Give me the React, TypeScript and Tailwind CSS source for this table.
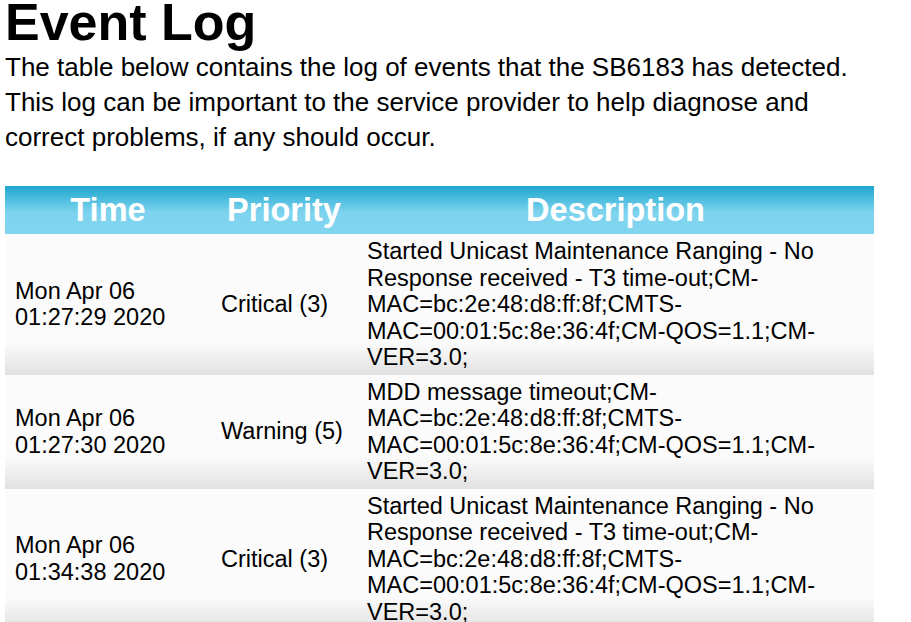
type LogEvent = {
  date: string;
  time: string;
  priority: string;
  description: string;
};

const T3_TIMEOUT =
  "Started Unicast Maintenance Ranging - No Response received - T3 time-out;CM-MAC=bc:2e:48:d8:ff:8f;CMTS-MAC=00:01:5c:8e:36:4f;CM-QOS=1.1;CM-VER=3.0;";

const EVENTS: LogEvent[] = [
  { date: "Mon Apr 06", time: "01:27:29 2020", priority: "Critical (3)", description: T3_TIMEOUT },
  {
    date: "Mon Apr 06",
    time: "01:27:30 2020",
    priority: "Warning (5)",
    description:
      "MDD message timeout;CM-MAC=bc:2e:48:d8:ff:8f;CMTS-MAC=00:01:5c:8e:36:4f;CM-QOS=1.1;CM-VER=3.0;",
  },
  { date: "Mon Apr 06", time: "01:34:38 2020", priority: "Critical (3)", description: T3_TIMEOUT },
];

// gray fade at the bottom of every row, like the modem's stock stylesheet
const rowBg =
  "bg-[linear-gradient(to_bottom,#fbfbfb_0%,#fbfbfb_calc(100%_-_32px),#e1e1e1_100%)]";

export default function App() {
  return (
    <div className="min-h-screen bg-white pl-[5px] font-['Liberation_Sans',Arial,sans-serif] text-black">
      <div className="w-[869px]">
        <h1 className="text-[52px] leading-[44px] font-bold">Event Log</h1>
        <p className="mt-[6px] text-[26px] leading-[35px]">
          The table below contains the log of events that the SB6183 has detected. This log can
          be important to the service provider to help diagnose and correct problems, if any
          should occur.
        </p>

        <table className="mt-[31px] w-[869px] table-fixed border-collapse text-[23.5px] leading-[26.5px]">
          <colgroup>
            <col className="w-[206px]" />
            <col className="w-[146px]" />
            <col className="w-[517px]" />
          </colgroup>
          <thead>
            <tr className="bg-[linear-gradient(to_bottom,#1ea7cf_0%,#7dd3ee_55%,#82d5ef_100%)]">
              <th className="h-[48px] p-0 text-center text-[32.5px] leading-[48px] font-bold text-white">
                Time
              </th>
              <th className="h-[48px] p-0 text-center text-[32.5px] leading-[48px] font-bold text-white">
                Priority
              </th>
              <th className="h-[48px] p-0 text-center text-[32.5px] leading-[48px] font-bold text-white">
                Description
              </th>
            </tr>
          </thead>
          <tbody>
            {EVENTS.map((ev, i) => (
              <tr key={i}>
                <td className={`${rowBg} px-[10px] py-1 align-middle`}>
                  {ev.date} {ev.time}
                </td>
                <td className={`${rowBg} px-[10px] py-1 align-middle`}>{ev.priority}</td>
                <td className={`${rowBg} px-[10px] py-1 align-middle`}>{ev.description}</td>
              </tr>
            ))}
          </tbody>
        </table>
      </div>
    </div>
  );
}
